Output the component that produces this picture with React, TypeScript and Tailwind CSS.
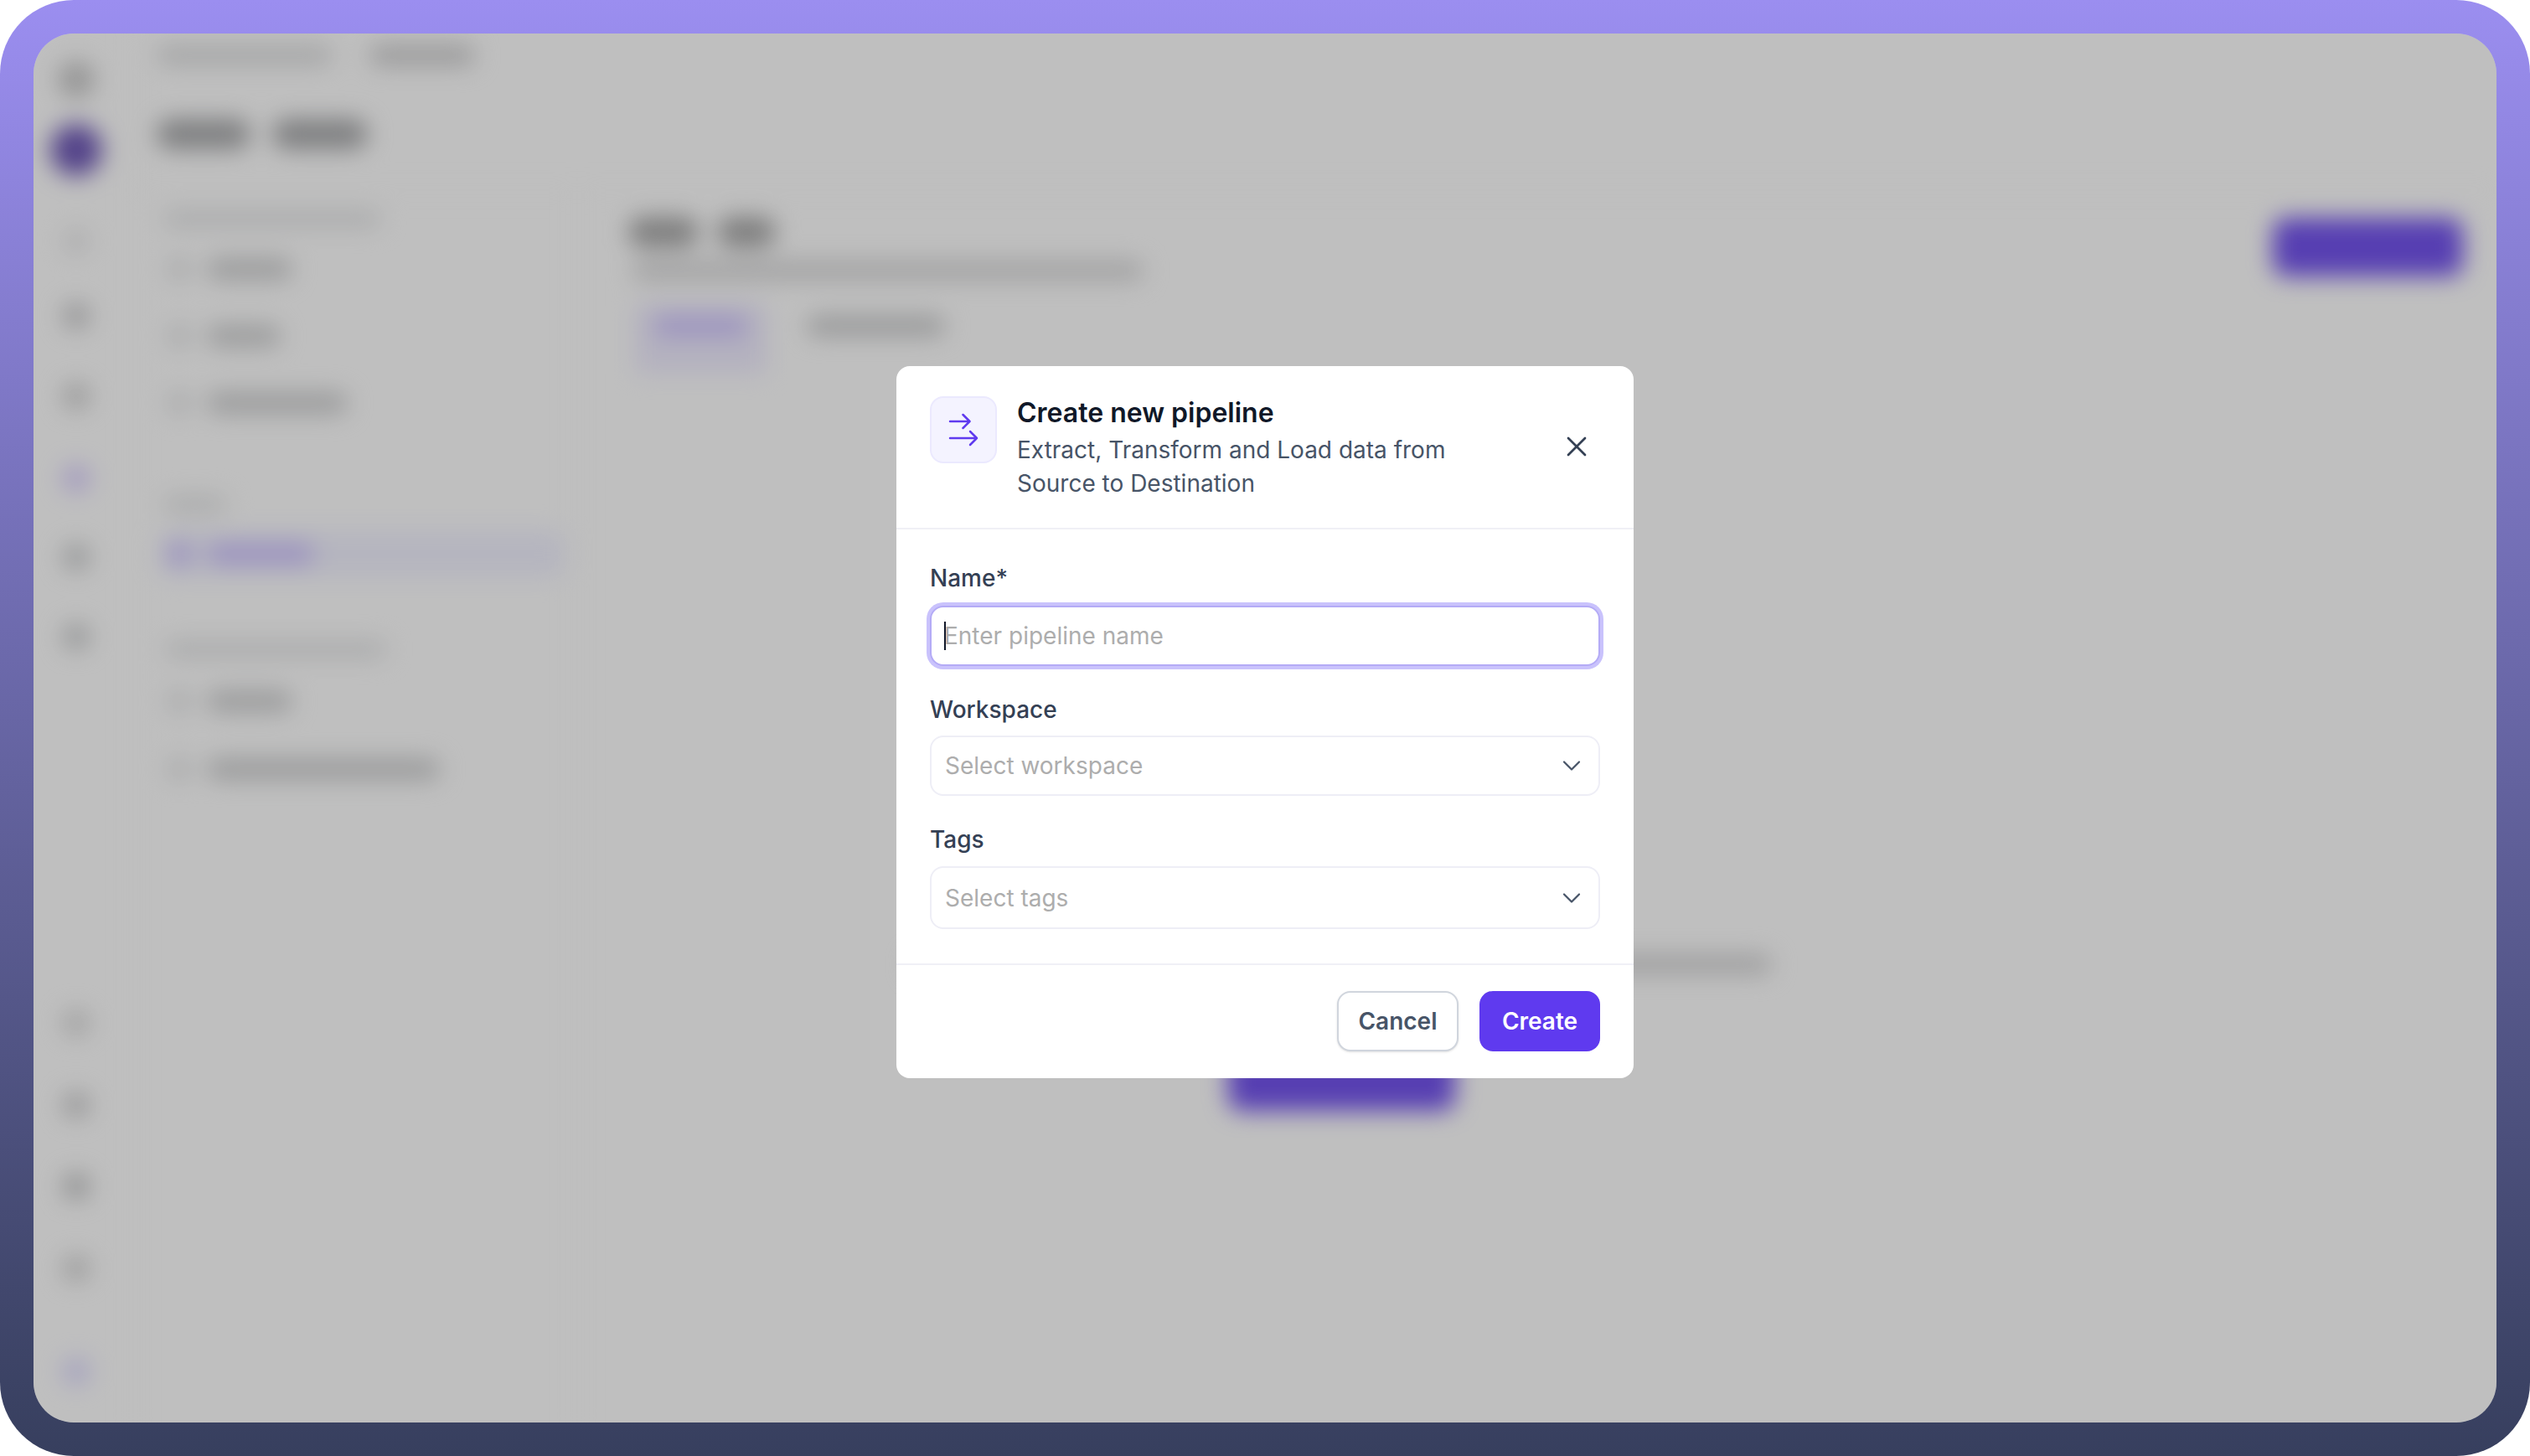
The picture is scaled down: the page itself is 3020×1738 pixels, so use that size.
import { ChevronDown, X } from 'lucide-react';

function Blob({ className }: { className: string }) {
  return <div className={`rounded-full ${className}`} />;
}

function SideRow({ text, active }: { text: string; active?: boolean }) {
  return (
    <div
      className={`flex h-[56px] w-[483px] items-center gap-[19px] rounded-[12px] pl-[9px] ${active ? 'bg-[#f2f2ff]' : ''}`}
    >
      <div className={`h-[28px] w-[28px] rounded-lg ${active ? 'bg-[#d0c4ff]' : 'bg-[#e6e7e8]'}`} />
      <div className={`h-[26px] rounded-full ${text} ${active ? 'bg-[#d0c4ff]' : 'bg-[#cfd0d1]'}`} />
    </div>
  );
}

function BlurredApp() {
  return (
    <div className="flex h-full w-full blur-[14px]">
      <aside className="flex h-full w-[120px] flex-col items-center border-r-2 border-[#f6f6f6] pr-4 pt-[33px] pb-[45px]">
        <Blob className="h-[44px] w-[44px] bg-[#c8c8c8]" />
        <Blob className="mt-[31px] h-[62px] w-[62px] bg-[#705ab8]" />
        <Blob className="mt-[62px] h-[32px] w-[32px] bg-[#eaeaeb]" />
        <Blob className="mt-[57px] h-[32px] w-[32px] bg-[#c8c8ca]" />
        <Blob className="mt-[64px] h-[32px] w-[32px] bg-[#cecece]" />
        <Blob className="mt-[66px] h-[32px] w-[32px] bg-[#d8ccff]" />
        <Blob className="mt-[62px] h-[32px] w-[32px] bg-[#cacccd]" />
        <Blob className="mt-[63px] h-[32px] w-[32px] bg-[#cacccd]" />
        <div className="mt-auto flex flex-col items-center">
          <Blob className="h-[32px] w-[32px] bg-[#d8d8d8]" />
          <Blob className="mt-[66px] h-[32px] w-[32px] bg-[#cccccd]" />
          <Blob className="mt-[65px] h-[32px] w-[32px] bg-[#c2c3c4]" />
          <Blob className="mt-[66px] h-[32px] w-[32px] bg-[#d2d2d2]" />
          <Blob className="mt-[91px] h-[32px] w-[32px] bg-[#dcd8ff]" />
        </div>
      </aside>

      <div className="flex min-w-0 flex-1 flex-col">
        <header className="h-[188px] border-b-2 border-[#f8f8f8] pl-[27px] pt-[14px]">
          <div className="flex items-center gap-[44px]">
            <Blob className="h-[22px] w-[210px] bg-[#dbdcdd]" />
            <Blob className="h-[24px] w-[126px] bg-[#cdcdce]" />
          </div>
          <div className="mt-[64px] flex gap-[26px]">
            <Blob className="h-[36px] w-[112px] bg-[#a9aaac]" />
            <Blob className="h-[36px] w-[114px] bg-[#a9aaac]" />
          </div>
        </header>

        <div className="flex min-h-0 flex-1">
          <nav className="h-full w-[530px] border-r-2 border-[#f8f8f8] pl-[31px] pt-[22px]">
            <Blob className="ml-[3px] h-[22px] w-[261px] bg-[#e6e7e8]" />
            <div className="mt-[21px] flex flex-col gap-[24px]">
              <SideRow text="w-[102px]" />
              <SideRow text="w-[88px]" />
              <SideRow text="w-[168px]" />
            </div>
            <Blob className="ml-[3px] mt-[82px] h-[22px] w-[77px] bg-[#e6e7e8]" />
            <div className="mt-[20px]">
              <SideRow text="w-[128px]" active />
            </div>
            <Blob className="ml-[5px] mt-[75px] h-[22px] w-[266px] bg-[#e6e7e8]" />
            <div className="mt-[23px] flex flex-col gap-[25px]">
              <SideRow text="w-[102px]" />
              <SideRow text="w-[278px]" />
            </div>
          </nav>

          <main className="flex min-w-0 flex-1 flex-col">
            <div className="flex items-start justify-between pl-[60px] pr-[40px] pt-[31px]">
              <div>
                <div className="flex gap-[22px]">
                  <Blob className="h-[36px] w-[84px] bg-[#a8a8a8]" />
                  <Blob className="h-[36px] w-[70px] bg-[#a8a8a8]" />
                </div>
                <Blob className="ml-[4px] mt-[16px] h-[24px] w-[611px] bg-[#d9d9da]" />
              </div>
              <div className="mt-[1px] h-[70px] w-[227px] rounded-[16px] bg-[#7454ee]" />
            </div>
            <div className="ml-[68px] mt-[26px] flex items-end gap-[48px]">
              <div className="flex h-[85px] w-[157px] items-start justify-center rounded-t-[10px] bg-[#f0edff] pt-[16px]">
                <Blob className="h-[24px] w-[111px] bg-[#d0c4ff]" />
              </div>
              <Blob className="mb-[45px] h-[24px] w-[165px] bg-[#cbcccd]" />
            </div>
            <div className="flex flex-col items-center pr-[468px]">
              <Blob className="mt-[693px] h-[24px] w-[1028px] bg-[#d5d5d6]" />
              <div className="mt-[93px] h-[70px] w-[271px] rounded-[16px] bg-[#7454ee]" />
            </div>
          </main>
        </div>
      </div>
    </div>
  );
}

function PipelineIcon() {
  return (
    <svg width="48" height="48" viewBox="0 0 48 48" fill="none" stroke="#5f3aef" strokeWidth="2.5" strokeLinecap="round" strokeLinejoin="round">
      <path d="M8 14H31M23.5 6L31.5 14L23.5 22" />
      <path d="M8 34H40M32 26L40 34L32 42" />
    </svg>
  );
}

function SelectField({ label, placeholder, height, gap }: { label: string; placeholder: string; height: string; gap: string }) {
  return (
    <div className={`flex flex-col ${gap}`}>
      <label className="text-[28px] leading-[40px] font-medium text-[#344054]">{label}</label>
      <button
        type="button"
        className={`flex w-full items-center justify-between rounded-[16px] border-2 border-[#eeeef6] bg-white pl-[16px] pr-[14px] text-[28px] leading-[40px] text-[#adadad] ${height}`}
      >
        <span>{placeholder}</span>
        <ChevronDown size={36} strokeWidth={1.5} className="text-[#475467]" />
      </button>
    </div>
  );
}

function CreatePipelineDialog() {
  return (
    <div className="mt-[397px] w-[880px] self-start rounded-[16px] bg-white">
      <div className="flex border-b-2 border-[#f0f0f6] px-[40px] pb-[33px] pt-[36px]">
        <div className="flex h-[80px] w-[80px] shrink-0 items-center justify-center rounded-[16px] border-2 border-[#ebe9fe] bg-[#f4f3ff]">
          <PipelineIcon />
        </div>
        <div className="ml-[24px] flex-1">
          <h2 className="text-[32px] leading-[40px] font-semibold text-[#101828]">Create new pipeline</h2>
          <p className="mt-[4px] w-[540px] text-[28px] leading-[40px] text-[#475467]">
            Extract, Transform and Load data from Source to Destination
          </p>
        </div>
        <button type="button" className="-mt-[4px] flex h-[56px] w-[56px] items-center justify-center self-center text-[#344054]">
          <X size={40} strokeWidth={1.67} />
        </button>
      </div>

      <div className="flex flex-col gap-[32px] px-[40px] pb-[41px] pt-[38px]">
        <div className="flex flex-col gap-[13px]">
          <label className="text-[28px] leading-[40px] font-medium text-[#344054]">Name*</label>
          <div className="flex h-[72px] items-center rounded-[16px] border-2 border-[#b4abf6] bg-white pl-[15px] ring-4 ring-[#c9c2fc]">
            <span className="-mr-[2px] h-[34px] w-[2px] bg-[#101828]" />
            <span className="text-[28px] leading-[40px] text-[#adadad]">Enter pipeline name</span>
          </div>
        </div>
        <SelectField label="Workspace" placeholder="Select workspace" height="h-[72px]" gap="gap-[11px]" />
        <SelectField label="Tags" placeholder="Select tags" height="h-[75px]" gap="gap-[12px]" />
      </div>

      <div className="flex justify-end gap-[25px] border-t-2 border-[#f0f0f6] px-[40px] pb-[32px] pt-[31px]">
        <button
          type="button"
          className="h-[72px] w-[145px] rounded-[16px] border-2 border-[#d0d5dd] bg-white text-[28px] font-semibold text-[#475467] shadow-sm"
        >
          Cancel
        </button>
        <button type="button" className="h-[72px] w-[144px] rounded-[16px] bg-[#5f3aef] text-[28px] font-semibold text-white">
          Create
        </button>
      </div>
    </div>
  );
}

export default function App() {
  return (
    <div className="h-[1738px] w-[3020px] rounded-[88px] bg-gradient-to-b from-[#9b8ef0] to-[#373f5e] p-[40px] [font-family:Inter,sans-serif]">
      <div className="relative h-full w-full overflow-hidden rounded-[48px] bg-white">
        <BlurredApp />
        <div className="absolute inset-0 flex justify-center bg-black/25">
          <CreatePipelineDialog />
        </div>
      </div>
    </div>
  );
}
